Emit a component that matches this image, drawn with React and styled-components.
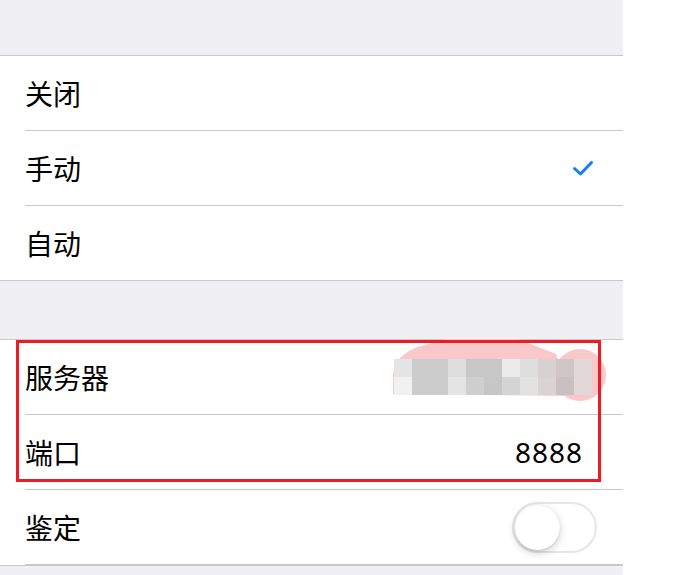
import React from "react";
import styled, { createGlobalStyle } from "styled-components";

const GlobalStyle = createGlobalStyle`
  body {
    margin: 0;
    background: #fff;
    font-family: "Noto Sans CJK SC", "Noto Sans", sans-serif;
  }
`;

const Screen = styled.div`
  width: 623px;
  min-height: 575px;
  box-sizing: border-box;
  padding-top: 55px;
  background: #efeff4;
  display: flex;
  flex-direction: column;
  gap: 58px;
`;

const Group = styled.div`
  position: relative;
  background: #fff;
  border-top: 1px solid #c8c7cc;
  border-bottom: 1px solid #c8c7cc;
`;

const Row = styled.div`
  height: 74px;
  margin-left: 25px;
  display: flex;
  align-items: center;
  justify-content: space-between;

  &:not(:last-child) {
    border-bottom: 1px solid #c8c7cc;
  }
`;

const Label = styled.span`
  font-size: 28px;
  line-height: 1;
  color: #000;
`;

const Value = styled.span`
  margin-right: ${(p) => p.$right}px;
  font-family: "Noto Sans", sans-serif;
  font-size: 28px;
  letter-spacing: 1px;
  line-height: 1;
  color: #000;
`;

const Check = styled.svg`
  margin-right: 29px;
`;

const Mosaic = styled.div`
  position: relative;
  z-index: 1;
  margin-right: 31px;
  display: grid;
  grid-template-columns: repeat(11, 18px);
  grid-auto-rows: 18px;
`;

const Cell = styled.div`
  background: ${(p) => p.$c};
`;

const Switch = styled.div`
  position: relative;
  width: 85px;
  height: 51px;
  margin-right: 26px;
  box-sizing: border-box;
  border: 2px solid #e5e5ea;
  border-radius: 26px;
  background: #fff;
`;

const Knob = styled.div`
  position: absolute;
  top: 1px;
  left: 1px;
  width: 45px;
  height: 45px;
  border-radius: 50%;
  background: #fff;
  box-shadow: 0 3px 8px rgba(0, 0, 0, 0.18), 0 2px 1px rgba(0, 0, 0, 0.06),
    0 0 0 0.5px rgba(0, 0, 0, 0.06);
`;

const Smudge = styled.svg`
  position: absolute;
  left: 0;
  top: -2px;
  z-index: 0;
  pointer-events: none;
`;

const Marker = styled.div`
  position: absolute;
  z-index: 2;
  top: 0;
  left: 16px;
  width: 585px;
  height: 142px;
  box-sizing: border-box;
  border: 3px solid #ed1c24;
  pointer-events: none;
`;

const mosaic = [
  ["#e5e5e5", "#cccccc", "#cccccc", "#dddddd", "#c7c7c7", "#c7c7c7", "#ebebeb", "#dedede", "#d8d1d2", "#d0c6c7", "#e2d8d9"],
  ["#f1f1f1", "#cccccc", "#cccccc", "#e4e4e4", "#cfcfcf", "#c6c6c6", "#d4d4d4", "#e2e2e2", "#dad3d4", "#c9c0c1", "#e2d8d9"],
];

const modes = ["关闭", "手动", "自动"];

export default function App() {
  return (
    <>
      <GlobalStyle />
      <Screen>
        <Group>
          {modes.map((m) => (
            <Row key={m}>
              <Label>{m}</Label>
              {m === "手动" && (
                <Check width="22" height="16" viewBox="0 0 22 16">
                  <path
                    d="M2.5 8.5 L8.5 14 L19.5 2.5"
                    fill="none"
                    stroke="#147efb"
                    strokeWidth="3"
                    strokeLinecap="round"
                    strokeLinejoin="round"
                  />
                </Check>
              )}
            </Row>
          ))}
        </Group>

        <Group>
          <Row>
            <Label>服务器</Label>
            <Mosaic>
              {mosaic.flat().map((c, i) => (
                <Cell key={i} $c={c} />
              ))}
            </Mosaic>
          </Row>
          <Row>
            <Label>端口</Label>
            <Value $right={40}>8888</Value>
          </Row>
          <Row>
            <Label>鉴定</Label>
            <Switch>
              <Knob />
            </Switch>
          </Row>
          <Smudge width="623" height="80" viewBox="0 338 623 80">
            <path
              d="M393 394 L393 378 C393 360 405 350 425 345 L445 339 L518 339 L556 354 L570 396 Z"
              fill="#f9c8cb"
            />
            <circle cx="580" cy="375" r="26" fill="#f9c8cb" />
          </Smudge>
          <Marker />
        </Group>
      </Screen>
    </>
  );
}
